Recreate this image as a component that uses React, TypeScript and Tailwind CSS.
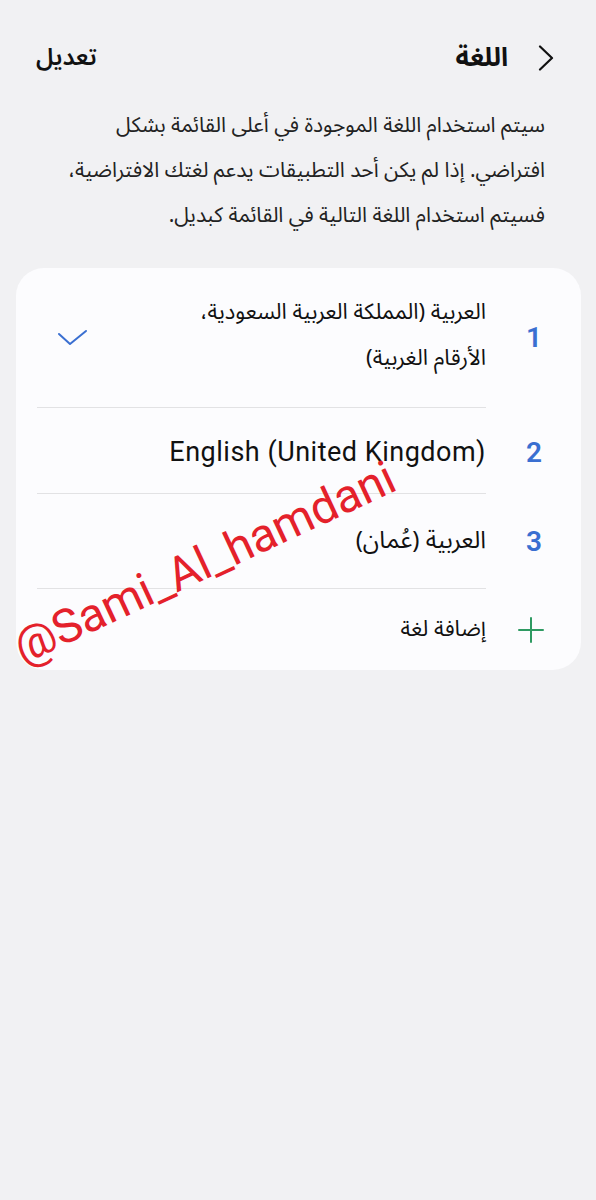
import React from "react";

const ar = { fontFamily: '"Noto Sans Arabic", "DejaVu Sans", "Noto Sans", sans-serif' };
const num = { fontFamily: 'Roboto, "Noto Sans", sans-serif' };

export default function App() {
  return (
    <div dir="rtl" className="w-[596px] h-[1200px] bg-[#f1f1f3] relative overflow-hidden" style={ar}>
      {/* header */}
      <div className="flex items-center justify-between h-[88px] pt-[28px] pr-[42px] pl-[36px]">
        <div className="flex items-center gap-[30px]">
          <svg width="16" height="26" viewBox="0 0 16 26" fill="none">
            <path d="M2 1.5 L14 13 L2 24.5" stroke="#111" strokeWidth="2.2" strokeLinecap="round" strokeLinejoin="round" />
          </svg>
          <span className="text-[26px] font-bold text-[#111] leading-none">اللغة</span>
        </div>
        <span className="text-[24px] font-semibold text-[#111] leading-none">تعديل</span>
      </div>

      {/* description */}
      <div className="mt-[15px] pr-[51px] pl-[40px] text-[21px] leading-[45px] text-[#222]">
        سيتم استخدام اللغة الموجودة في أعلى القائمة بشكل افتراضي. إذا لم يكن أحد التطبيقات يدعم لغتك الافتراضية، فسيتم استخدام اللغة التالية في القائمة كبديل.
      </div>

      {/* card */}
      <div className="mt-[30px] mr-[15px] ml-[16px] rounded-[28px] bg-[#fcfcfe] pr-[39px] pl-[21px]">
        {/* row 1 */}
        <div className="flex items-stretch h-[140px]">
          <div className="w-[56px] flex items-center justify-start text-[28px] font-semibold text-[#3a6fd1]" style={num}>
            <span>1</span>
          </div>
          <div className="flex-1 flex items-center justify-between border-b border-[#e2e2e4]">
            <div className="text-[22px] leading-[46px] text-[#111] -mt-[6px]">
              <div>العربية (المملكة العربية السعودية،</div>
              <div>الأرقام الغربية)</div>
            </div>
            <svg width="32" height="20" viewBox="0 0 32 20" fill="none" className="ml-[20px] mt-[2px]">
              <path d="M2 5 L13 15 L29 2" stroke="#3a6fd1" strokeWidth="2" strokeLinecap="round" strokeLinejoin="round" />
            </svg>
          </div>
        </div>
        {/* row 2 */}
        <div className="flex items-stretch h-[86px]">
          <div className="w-[56px] flex items-center justify-start text-[28px] font-semibold text-[#3a6fd1]" style={num}>
            <span className="mt-[4px]">2</span>
          </div>
          <div className="flex-1 flex items-center border-b border-[#e2e2e4]">
            <span dir="ltr" className="text-[27px] tracking-[0.5px] text-[#111] mt-[4px]" style={num}>English (United Kingdom)</span>
          </div>
        </div>
        {/* row 3 */}
        <div className="flex items-stretch h-[95px]">
          <div className="w-[56px] flex items-center justify-start text-[28px] font-semibold text-[#3a6fd1]" style={num}>
            <span>3</span>
          </div>
          <div className="flex-1 flex items-center border-b border-[#e2e2e4]">
            <span className="text-[24px] text-[#111]">العربية (عُمان)</span>
          </div>
        </div>
        {/* add */}
        <div className="flex items-stretch h-[81px]">
          <div className="w-[56px] flex items-center justify-start">
            <svg width="28" height="28" viewBox="0 0 28 28" fill="none" className="-mr-[3px]">
              <path d="M14 2 V26 M2 14 H26" stroke="#2e9a62" strokeWidth="2" strokeLinecap="round" />
            </svg>
          </div>
          <div className="flex-1 flex items-center">
            <span className="text-[22px] text-[#111]">إضافة لغة</span>
          </div>
        </div>
      </div>

      {/* watermark */}
      <div
        dir="ltr"
        className="absolute left-[16px] top-[626px] text-[47px] text-[#e4212b] leading-none whitespace-nowrap pointer-events-none origin-left"
        style={{ fontFamily: 'Roboto, "Liberation Sans", sans-serif', transform: "rotate(-25deg)" }}
      >
        @Sami_Al_hamdani
      </div>
    </div>
  );
}
